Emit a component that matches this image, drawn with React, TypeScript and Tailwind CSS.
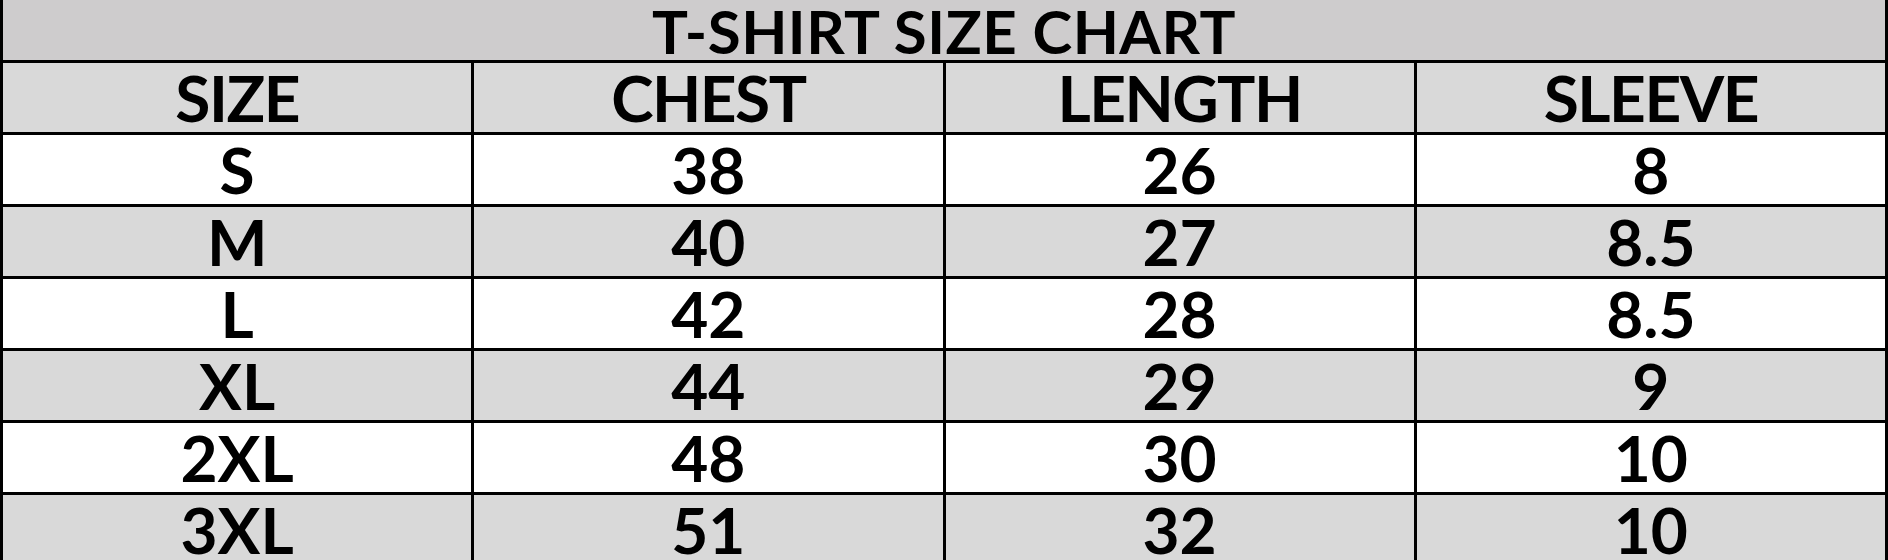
const header = ["SIZE", "CHEST", "LENGTH", "SLEEVE"];

const rows = [
  ["S", "38", "26", "8"],
  ["M", "40", "27", "8.5"],
  ["L", "42", "28", "8.5"],
  ["XL", "44", "29", "9"],
  ["2XL", "48", "30", "10"],
  ["3XL", "51", "32", "10"],
];

export default function App() {
  return (
    <div
      className="h-[560px] w-[1888px] overflow-hidden bg-white text-black"
      style={{ fontFamily: "Lato, 'Open Sans', sans-serif" }}
    >
      <div className="grid grid-cols-4 gap-[3px] bg-black px-[3px]">
        <div className="col-span-4 flex h-[60px] items-center justify-center overflow-hidden bg-[#cecccd] pt-[2px] text-[60px] font-bold leading-[60px] tracking-[0.5px]">
          T-SHIRT SIZE CHART
        </div>
        {header.map((h) => (
          <div
            key={h}
            className="flex h-[69px] items-center justify-center bg-[#d9d9d9] text-[64px] font-bold leading-none tracking-[-1.5px]"
          >
            {h}
          </div>
        ))}
        {rows.map((row, i) =>
          row.map((cell, j) => (
            <div
              key={i + "-" + j}
              className={
                "flex h-[69px] items-center justify-center text-[64px] font-bold leading-none " +
                (i % 2 === 0 ? "bg-white" : "bg-[#d9d9d9]")
              }
            >
              {cell}
            </div>
          ))
        )}
      </div>
    </div>
  );
}
